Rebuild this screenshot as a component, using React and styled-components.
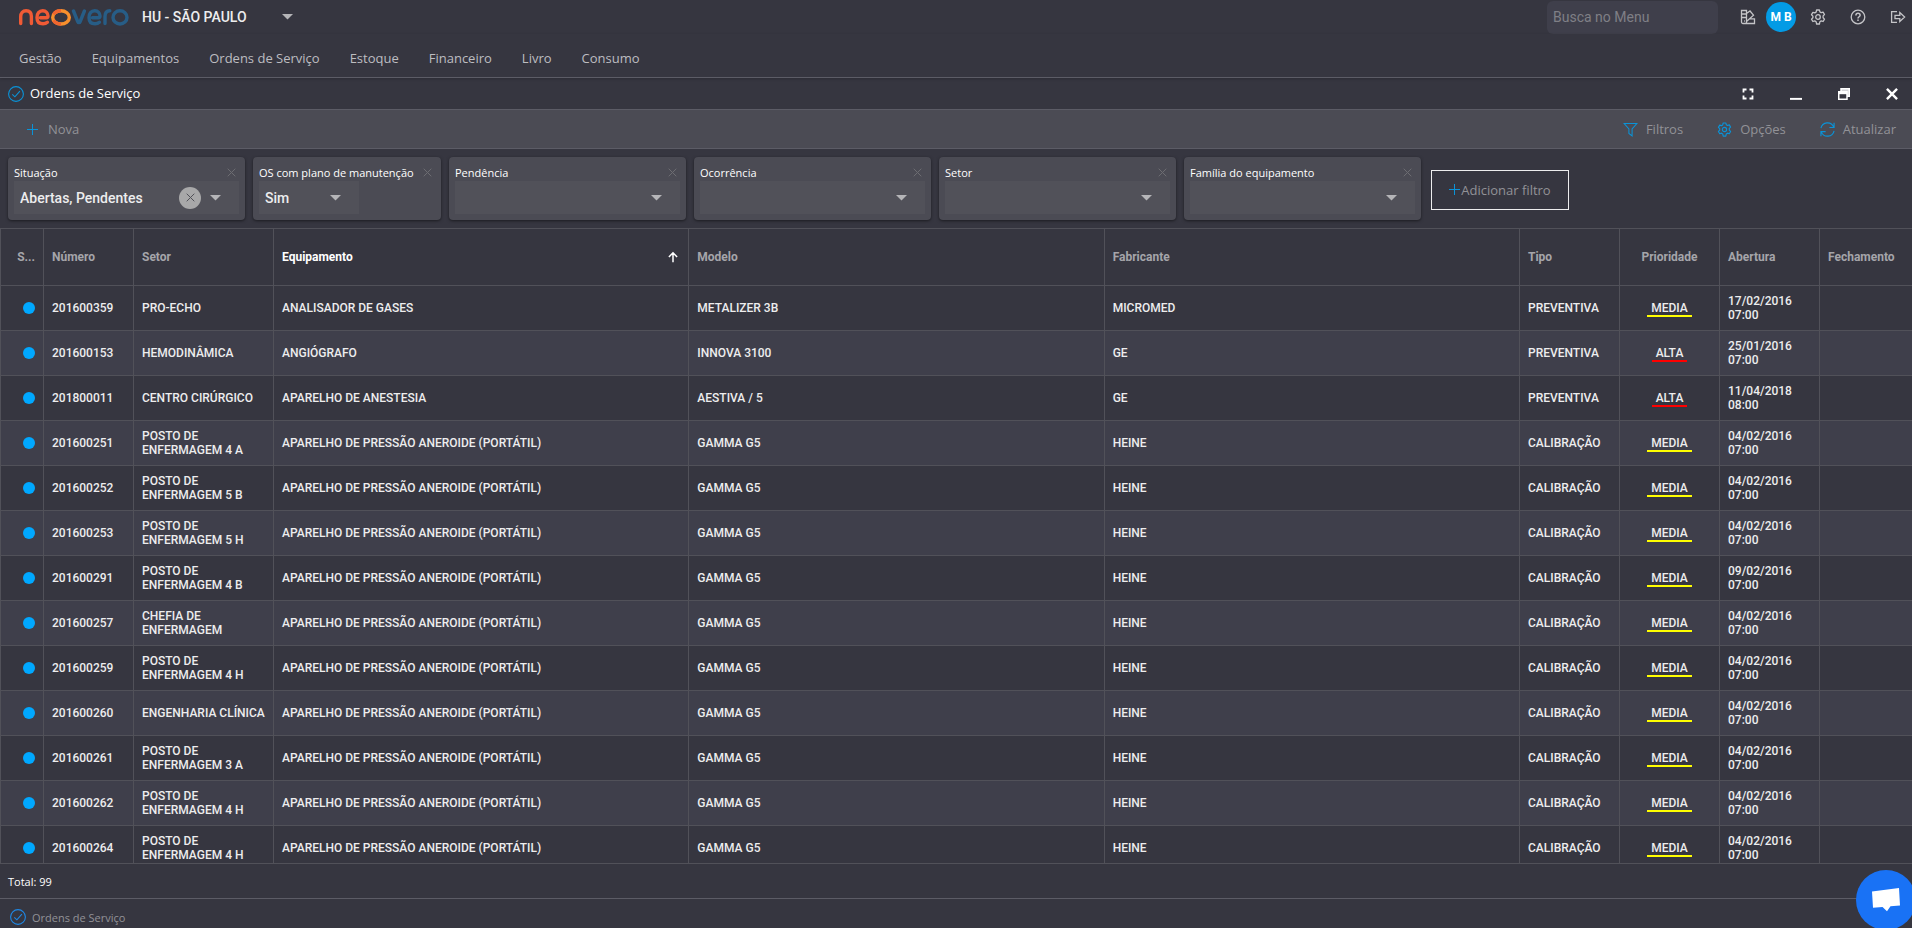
import React from 'react';
import styled, { createGlobalStyle } from 'styled-components';

const colors = {
  base: '#363640',
  alt: '#3f3f4b',
  bar: '#4b4b54',
  field: '#515159',
  line: '#515159',
  lineStrong: '#5c5c66',
  text: '#ededee',
  faded: '#929297',
  blue: '#0a93d8',
  dot: '#00a8ff',
};

const segoe = `'Open Sans', 'Noto Sans', sans-serif`;

const GlobalStyle = createGlobalStyle`
  * {
    box-sizing: border-box;
  }
  body {
    margin: 0;
    background: ${colors.base};
    color: ${colors.text};
    font-family: Roboto, sans-serif;
    font-size: 14px;
  }
  button, input, select {
    font: inherit;
    color: inherit;
    border: 0;
    background: none;
    padding: 0;
    margin: 0;
  }
  svg {
    display: block;
    flex: none;
  }
`;

const Page = styled.div`
  display: flex;
  flex-direction: column;
  height: 100vh;
  overflow: hidden;
`;

const TopBar = styled.header`
  display: flex;
  align-items: center;
  height: 34px;
  padding: 0 6px 0 19px;
`;

const UnitSelect = styled.div`
  display: flex;
  flex: none;
  align-items: center;
  width: 151px;
  margin: 0 auto 0 13px;
  font-weight: 500;
  select {
    flex: 1;
    min-width: 0;
    appearance: none;
    outline: none;
  }
`;

const Search = styled.input`
  width: 171px;
  height: 33px;
  padding: 0 6px;
  border-radius: 6px;
  background: ${colors.alt};
  outline: none;
  &::placeholder {
    color: #7f7f86;
    opacity: 1;
  }
`;

const TopIcons = styled.div`
  display: flex;
  align-items: center;
  margin-left: 22px;
  color: #c4c4c7;
  button {
    display: flex;
  }
`;

const Avatar = styled.button`
  justify-content: center;
  align-items: center;
  width: 30px;
  height: 30px;
  margin: 0 14px 0 10px;
  border-radius: 50%;
  background: #039be5;
  color: #fff;
  font-size: 12px;
  font-weight: 700;
`;

const IconButton = styled.button`
  margin-left: ${(p) => p.$gap || 0}px;
`;

const Menu = styled.nav`
  display: flex;
  gap: 30px;
  height: 44px;
  padding: 14px 19px 0;
  border-bottom: 1px solid ${colors.lineStrong};
  box-shadow: 0 1px 3px rgba(0, 0, 0, 0.2);
  a {
    color: #bdbdc0;
    font-family: ${segoe};
    font-size: 13px;
    line-height: 20px;
    text-decoration: none;
  }
`;

const TitleBar = styled.div`
  display: flex;
  align-items: center;
  height: 31px;
  padding: 0 14px 0 8px;
  h1 {
    margin: 0 auto 2px 6px;
    color: #fff;
    font-family: ${segoe};
    font-size: 13px;
    font-weight: 500;
    line-height: 20px;
  }
`;

const WindowButtons = styled.div`
  display: flex;
  gap: 36px;
  color: #fff;
`;

const Toolbar = styled.div`
  display: flex;
  align-items: center;
  gap: 34px;
  height: 40px;
  padding: 0 16px 0 27px;
  border: solid ${colors.lineStrong};
  border-width: 1px 0;
  background: ${colors.bar};
`;

const ToolButton = styled.button`
  display: flex;
  align-items: center;
  gap: ${(p) => p.$gap || 8}px;
  margin-right: ${(p) => (p.$push ? 'auto' : '0')};
  color: ${colors.faded};
  font-family: ${segoe};
  font-size: 13px;
  line-height: 20px;
  svg {
    color: ${colors.blue};
  }
`;

const Filters = styled.div`
  display: flex;
  align-items: center;
  gap: 8px;
  height: 79px;
  padding: 0 8px;
`;

const FilterCard = styled.div`
  width: ${(p) => p.$width || 237}px;
  height: 63px;
  padding: 7px 6px 6px;
  border-radius: 4px;
  background: ${colors.bar};
  box-shadow: 0 1px 3px rgba(0, 0, 0, 0.5);
`;

const FilterHead = styled.div`
  display: flex;
  justify-content: space-between;
  height: 17px;
  padding-right: 3px;
  white-space: nowrap;
  label {
    color: #fff;
    font-family: ${segoe};
    font-size: 11px;
    font-weight: 500;
    line-height: 17px;
  }
  button {
    color: #6d6d72;
  }
`;

const Field = styled.div`
  display: flex;
  align-items: center;
  gap: 9px;
  width: ${(p) => (p.$width ? `${p.$width}px` : '100%')};
  height: 33px;
  padding: 0 18px 0 6px;
  background: ${colors.field};
  font-weight: 500;
  select {
    flex: 1;
    min-width: 0;
    height: 33px;
    appearance: none;
    outline: none;
  }
`;

const Clear = styled.button`
  display: flex;
  justify-content: center;
  align-items: center;
  width: 22px;
  height: 22px;
  border-radius: 50%;
  background: #a8a8a9;
  color: #515159;
`;

const AddFilter = styled.button`
  display: flex;
  justify-content: center;
  align-items: center;
  gap: 1px;
  width: 138px;
  height: 40px;
  margin: 2px 0 0 2px;
  border: 1px solid #ededee;
  color: ${colors.faded};
  font-family: ${segoe};
  font-size: 13px;
  white-space: nowrap;
  svg {
    color: ${colors.blue};
  }
`;

const Grid = styled.div`
  flex: 1;
  min-height: 0;
  overflow: hidden;
  border: solid ${colors.line};
  border-width: 1px 0;
`;

const Table = styled.table`
  width: 100%;
  table-layout: fixed;
  border-collapse: separate;
  border-spacing: 0;
  border-left: 1px solid ${colors.line};
  font-size: 12px;
  line-height: 14px;
  th,
  td {
    padding: 0 8px;
    border: solid ${colors.line};
    border-width: 0 1px 1px 0;
    text-align: left;
    font-weight: 500;
  }
  th {
    height: 57px;
    color: #a5a5aa;
    font-weight: 700;
    white-space: nowrap;
  }
  td {
    height: 45px;
  }
  th:last-child,
  td:last-child {
    border-right: 0;
  }
  tbody tr:nth-child(even) {
    background: ${colors.alt};
  }
  .status {
    text-align: right;
  }
  .sorted {
    color: #fff;
  }
  .center {
    text-align: center;
  }
`;

const Sorted = styled.div`
  display: flex;
  justify-content: space-between;
  align-items: center;
  padding-right: 1px;
`;

const Dot = styled.span`
  display: block;
  width: 12px;
  height: 12px;
  margin-left: auto;
  border-radius: 50%;
  background: ${colors.dot};
`;

const Priority = styled.span`
  display: inline-block;
  padding: 1px 4px 0;
  border-bottom: 2px solid ${(p) => (p.$level === 'ALTA' ? '#f00' : '#ff0')};
`;

const Total = styled.div`
  height: 34px;
  padding: 9px 8px 0;
  color: #fff;
  font-family: ${segoe};
  font-size: 11px;
  font-weight: 500;
  line-height: 17px;
`;

const TaskBar = styled.footer`
  display: flex;
  align-items: center;
  gap: 6px;
  height: 30px;
  padding: 7px 10px 0;
  border-top: 1px solid ${colors.lineStrong};
  color: ${colors.faded};
  font-family: ${segoe};
  font-size: 11px;
  line-height: 17px;
`;

const Chat = styled.button`
  position: fixed;
  right: -4px;
  bottom: -2px;
  display: flex;
  justify-content: center;
  align-items: center;
  width: 60px;
  height: 60px;
  border-radius: 50%;
  background: #1972f5;
`;

const Icon = ({ size = 16, width = 1.3, color = 'currentColor', children }) => (
  <svg
    width={size}
    height={size}
    viewBox="0 0 16 16"
    fill="none"
    stroke={color}
    strokeWidth={width}
    aria-hidden="true"
  >
    {children}
  </svg>
);

const Caret = () => (
  <svg width="11" height="6" viewBox="0 0 11 6" aria-hidden="true">
    <path d="M0 0h11L5.500 5.500z" fill="#b5b5b8" />
  </svg>
);

const Cross = ({ size = 9, width = 1 }) => (
  <svg width={size} height={size} viewBox="0 0 9 9" stroke="currentColor" strokeWidth={width} aria-hidden="true">
    <path d="M.7.700l7.600 7.600M8.300.700L.7 8.300" />
  </svg>
);

const Plus = () => (
  <svg width="11" height="11" viewBox="0 0 11 11" stroke="currentColor" aria-hidden="true">
    <path d="M5.500 0v11M0 5.500h11" />
  </svg>
);

const CheckCircle = ({ color }) => (
  <Icon width={1.1} color={color}>
    <circle cx="8" cy="8" r="7.400" />
    <path d="M4.300 8.300l2.600 2.500 5-5.600" />
  </Icon>
);

const Gear = ({ size, width }) => (
  <Icon size={size} width={width}>
    <circle cx="8" cy="8" r="2.300" />
    <path
      d="M6.600 1h2.800l.5 1.900 1.300.8 1.900-.6 1.400 2.400-1.400 1.400v1.800l1.400 1.400-1.400 2.400-1.900-.6-1.300.8L9.400 15H6.600l-.5-2.300-1.300-.8-1.900.6-1.400-2.400 1.400-1.400V7.100L1.500 5.700l1.400-2.400 1.900.6 1.300-.8z"
      strokeLinejoin="round"
    />
  </Icon>
);

const Logo = () => (
  <svg width="110" height="17" viewBox="0 0 110 17" fill="none" strokeWidth="3.400" role="img" aria-label="neovero">
    <g stroke="#f05a35" strokeLinecap="round">
      <path d="M1.700 14.600V7.600C1.700 3.900 3.800 1.800 7.100 1.800s5.300 2.100 5.300 5.800v7" />
      <path d="M28.400 13.200c-1.200 1.100-2.600 1.600-4.400 1.600-3.900 0-6-2.500-6-6.300 0-3.900 2.200-6.700 5.700-6.700 3.300 0 5.300 2.500 5.300 5.300 0 1.200-.6 1.700-1.600 1.700h-6" />
    </g>
    <ellipse cx="42" cy="8.400" rx="8.300" ry="6.600" stroke="#f78f2d" />
    <path d="M34.500 5.400C36 3 38.700 1.800 42 1.800M34.500 11.400C36 13.800 38.700 15 42 15" stroke="#f0652f" />
    <g stroke="#275d86" strokeLinecap="round">
      <path d="M54.500 2l4.200 10.500c.6 1.500 1.900 1.500 2.500 0L65.400 2" strokeLinejoin="round" />
      <path d="M80.400 13.200c-1.200 1.100-2.600 1.600-4.400 1.600-3.900 0-6-2.500-6-6.300 0-3.900 2.200-6.700 5.700-6.700 3.300 0 5.300 2.500 5.300 5.300 0 1.200-.6 1.700-1.600 1.700h-6" />
      <path d="M86 14.600V7.500c0-3.700 1.500-5.600 4.800-5.700" />
    </g>
    <ellipse cx="101" cy="8.400" rx="7" ry="6.600" stroke="#275d86" />
  </svg>
);

const menu = ['Gestão', 'Equipamentos', 'Ordens de Serviço', 'Estoque', 'Financeiro', 'Livro', 'Consumo'];

const pressure = 'APARELHO DE PRESSÃO ANEROIDE (PORTÁTIL)';

const gauge = (number, sector, date = '04/02/2016') => [
  number,
  sector,
  pressure,
  'GAMMA G5',
  'HEINE',
  'CALIBRAÇÃO',
  'MEDIA',
  date,
  '07:00',
];

const orders = [
  ['201600359', 'PRO-ECHO', 'ANALISADOR DE GASES', 'METALIZER 3B', 'MICROMED', 'PREVENTIVA', 'MEDIA', '17/02/2016', '07:00'],
  ['201600153', 'HEMODINÂMICA', 'ANGIÓGRAFO', 'INNOVA 3100', 'GE', 'PREVENTIVA', 'ALTA', '25/01/2016', '07:00'],
  ['201800011', 'CENTRO CIRÚRGICO', 'APARELHO DE ANESTESIA', 'AESTIVA / 5', 'GE', 'PREVENTIVA', 'ALTA', '11/04/2018', '08:00'],
  gauge('201600251', 'POSTO DE ENFERMAGEM 4 A'),
  gauge('201600252', 'POSTO DE ENFERMAGEM 5 B'),
  gauge('201600253', 'POSTO DE ENFERMAGEM 5 H'),
  gauge('201600291', 'POSTO DE ENFERMAGEM 4 B', '09/02/2016'),
  gauge('201600257', 'CHEFIA DE ENFERMAGEM'),
  gauge('201600259', 'POSTO DE ENFERMAGEM 4 H'),
  gauge('201600260', 'ENGENHARIA CLÍNICA'),
  gauge('201600261', 'POSTO DE ENFERMAGEM 3 A'),
  gauge('201600262', 'POSTO DE ENFERMAGEM 4 H'),
  gauge('201600264', 'POSTO DE ENFERMAGEM 4 H'),
];

function Filter({ id, label, value = '', width, fieldWidth, clearable }) {
  return (
    <FilterCard $width={width}>
      <FilterHead>
        <label htmlFor={id}>{label}</label>
        <button type="button" aria-label={`Remover ${label}`}>
          <Cross />
        </button>
      </FilterHead>
      <Field $width={fieldWidth}>
        <select id={id} defaultValue={value}>
          <option>{value}</option>
        </select>
        {clearable && (
          <Clear type="button" aria-label="Limpar">
            <Cross />
          </Clear>
        )}
        <Caret />
      </Field>
    </FilterCard>
  );
}

export default function App() {
  return (
    <Page>
      <GlobalStyle />
      <TopBar>
        <Logo />
        <UnitSelect>
          <select aria-label="Unidade">
            <option>HU - SÃO PAULO</option>
          </select>
          <Caret />
        </UnitSelect>
        <Search type="search" placeholder="Busca no Menu" aria-label="Busca no Menu" />
        <TopIcons>
          <IconButton type="button" aria-label="Temas">
            <Icon>
              <path d="M1.500 1.500h5v11.800a1.500 1.500 0 0 1-1.500 1.200H3a1.500 1.500 0 0 1-1.500-1.500zM1.500 5h5M1.500 8.500h5M4 12h.8M6.500 4.500L10 2l3.500 4.200-7 6.300M9.500 9.800h5v4.700H4" />
            </Icon>
          </IconButton>
          <Avatar type="button">M B</Avatar>
          <IconButton type="button" aria-label="Configurações">
            <Gear />
          </IconButton>
          <IconButton type="button" aria-label="Ajuda" $gap={24}>
            <Icon>
              <circle cx="8" cy="8" r="6.800" />
              <path d="M5.900 6.500c0-1.400.9-2.200 2.100-2.200s2.100.8 2.100 1.900c0 1.500-2.100 1.600-2.100 3.200M8 10.500v1.500" strokeWidth="1.500" />
            </Icon>
          </IconButton>
          <IconButton type="button" aria-label="Sair" $gap={24}>
            <Icon>
              <path d="M7 2.600H1.600v10.800H7M5 6.300h4.800V3.600L14.600 8l-4.800 4.400V9.700H5z" />
            </Icon>
          </IconButton>
        </TopIcons>
      </TopBar>
      <Menu>
        {menu.map((item) => (
          <a href="#" key={item}>
            {item}
          </a>
        ))}
      </Menu>
      <TitleBar>
        <CheckCircle color={colors.blue} />
        <h1>Ordens de Serviço</h1>
        <WindowButtons>
          <button type="button" aria-label="Tela cheia">
            <Icon size={12} width={2.4}>
              <path d="M2 6V2h4M10 2h4v4M14 10v4h-4M6 14H2v-4" />
            </Icon>
          </button>
          <button type="button" aria-label="Minimizar">
            <Icon size={12} width={2.6}>
              <path d="M0 14.500h16" />
            </Icon>
          </button>
          <button type="button" aria-label="Restaurar">
            <Icon size={12} width={2}>
              <path d="M4 4V1h11v10h-3" fill="#d5d5d8" />
              <path d="M1 5h11v10H1z" fill={colors.base} />
              <path d="M1 6.500h11" strokeWidth="3.500" />
            </Icon>
          </button>
          <button type="button" aria-label="Fechar">
            <Cross size={12} width={1.8} />
          </button>
        </WindowButtons>
      </TitleBar>
      <Toolbar>
        <ToolButton type="button" $gap={10} $push>
          <Plus />
          Nova
        </ToolButton>
        <ToolButton type="button">
          <Icon size={15} width={1.1}>
            <path d="M1 1.500h14l-5.300 6v7.300l-3.400-2.600V7.500z" />
          </Icon>
          Filtros
        </ToolButton>
        <ToolButton type="button">
          <Gear size={15} width={1.2} />
          Opções
        </ToolButton>
        <ToolButton type="button">
          <Icon size={15} width={1.2}>
            <path d="M1 6.600A7.100 7.100 0 0 1 14.600 5.500M15 9.400A7.100 7.100 0 0 1 1.400 10.500M15 .800v5h-5M1 15.200v-5h5" />
          </Icon>
          Atualizar
        </ToolButton>
      </Toolbar>
      <Filters>
        <Filter id="situacao" label="Situação" value="Abertas, Pendentes" clearable />
        <Filter id="plano" label="OS com plano de manutenção" value="Sim" width={188} fieldWidth={100} />
        <Filter id="pendencia" label="Pendência" />
        <Filter id="ocorrencia" label="Ocorrência" />
        <Filter id="setor" label="Setor" />
        <Filter id="familia" label="Família do equipamento" />
        <AddFilter type="button">
          <Plus />
          Adicionar filtro
        </AddFilter>
      </Filters>
      <Grid>
        <Table>
          <colgroup>
            <col width="43" />
            <col width="90" />
            <col width="140" />
            <col />
            <col />
            <col />
            <col width="100" />
            <col width="100" />
            <col width="100" />
            <col width="92" />
          </colgroup>
          <thead>
            <tr>
              <th className="status">S...</th>
              <th>Número</th>
              <th>Setor</th>
              <th className="sorted">
                <Sorted>
                  Equipamento
                  <Icon size={12} width={2}>
                    <path d="M8 15V2.500M2.500 8L8 2.500 13.500 8" />
                  </Icon>
                </Sorted>
              </th>
              <th>Modelo</th>
              <th>Fabricante</th>
              <th>Tipo</th>
              <th className="center">Prioridade</th>
              <th>Abertura</th>
              <th>Fechamento</th>
            </tr>
          </thead>
          <tbody>
            {orders.map(([number, sector, equipment, model, maker, type, level, date, time]) => (
              <tr key={number}>
                <td>
                  <Dot />
                </td>
                <td>{number}</td>
                <td>{sector}</td>
                <td>{equipment}</td>
                <td>{model}</td>
                <td>{maker}</td>
                <td>{type}</td>
                <td className="center">
                  <Priority $level={level}>{level}</Priority>
                </td>
                <td>
                  {date} {time}
                </td>
                <td></td>
              </tr>
            ))}
          </tbody>
        </Table>
      </Grid>
      <Total>Total: 99</Total>
      <TaskBar>
        <CheckCircle color="#1e88e5" />
        Ordens de Serviço
      </TaskBar>
      <Chat type="button" aria-label="Chat">
        <svg width="30" height="26" viewBox="0 0 30 26" fill="#fff" aria-hidden="true">
          <path d="M1 4.500L28 1l1 17.500-9.500.8-3.500 5-4.500-4.300-9.500.8z" />
        </svg>
      </Chat>
    </Page>
  );
}
